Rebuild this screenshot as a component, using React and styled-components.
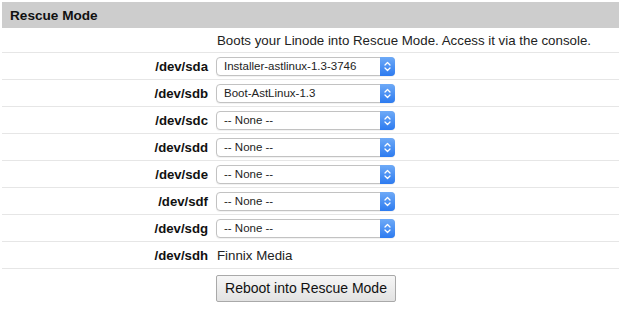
import React from "react";
import styled, { createGlobalStyle } from "styled-components";

const Global = createGlobalStyle`
  html, body { margin: 0; padding: 0; background: #fff; }
  body { font-family: "Liberation Sans", Arial, Helvetica, sans-serif; color: #111; }
`;

const Page = styled.div`
  padding: 2px 0 0 2px;
  width: 617px;
`;

const Header = styled.div`
  height: 26px;
  background: #cdcdcd;
  display: flex;
  align-items: center;
  padding-left: 8px;
  font-weight: bold;
  font-size: 13.6px;
  color: #111;
`;

const Row = styled.div`
  display: grid;
  grid-template-columns: 210px 1fr;
  align-items: center;
  height: ${(p) => p.$h || 27}px;
  border-bottom: ${(p) => (p.$last ? "none" : "1px solid #e6e6e6")};
  box-sizing: border-box;
`;

const Label = styled.div`
  text-align: right;
  padding-right: 4px;
  font-weight: bold;
  font-size: 13.2px;
  color: #111;
`;

const Value = styled.div`
  padding-left: 5px;
  font-size: 13.3px;
  color: #222;
  display: flex;
  align-items: center;
`;

const SelectBox = styled.div`
  position: relative;
  width: 179px;
  height: 19px;
  box-sizing: border-box;
  border: 1px solid #c2c2c2;
  border-radius: 4px;
  background: #fff;
  box-shadow: 0 1px 1px rgba(0,0,0,0.06);
  display: flex;
  align-items: center;
  margin-left: -1px;
`;

const SelectText = styled.span`
  font-family: "Liberation Sans", Arial, sans-serif;
  font-size: 11.5px;
  color: #222;
  padding-left: 7px;
  white-space: nowrap;
`;

const Cap = styled.div`
  position: absolute;
  top: -1px;
  right: -1px;
  bottom: -1px;
  width: 15px;
  border-radius: 0 4px 4px 0;
  background: linear-gradient(#6eaaf7, #2d7bf0);
  display: flex;
  align-items: center;
  justify-content: center;
`;

const Button = styled.button`
  margin-left: -1px;
  width: 180px;
  height: 27px;
  border: 1px solid #a9a9a9;
  border-radius: 2px;
  background: linear-gradient(#f6f6f6, #e2e2e2);
  font-family: "Liberation Sans", Arial, sans-serif;
  font-size: 14px;
  color: #111;
  padding: 0;
`;

function Chevrons() {
  return (
    <svg width="7" height="11" viewBox="0 0 7 11">
      <path d="M1 4 L3.5 1.5 L6 4 M1 7 L3.5 9.5 L6 7" fill="none" stroke="#fff" strokeWidth="1.3" strokeLinecap="round" strokeLinejoin="round" />
    </svg>
  );
}

function Select({ value }) {
  return (
    <SelectBox>
      <SelectText>{value}</SelectText>
      <Cap><Chevrons /></Cap>
    </SelectBox>
  );
}

const devices = [
  ["/dev/sda", "Installer-astlinux-1.3-3746"],
  ["/dev/sdb", "Boot-AstLinux-1.3"],
  ["/dev/sdc", "-- None --"],
  ["/dev/sdd", "-- None --"],
  ["/dev/sde", "-- None --"],
  ["/dev/sdf", "-- None --"],
  ["/dev/sdg", "-- None --"],
];

export default function App() {
  return (
    <>
      <Global />
      <Page>
        <Header>Rescue Mode</Header>
        <Row $h={25}>
          <Label />
          <Value>Boots your Linode into Rescue Mode. Access it via the console.</Value>
        </Row>
        {devices.map(([d, v]) => (
          <Row key={d}>
            <Label>{d}</Label>
            <Value><Select value={v} /></Value>
          </Row>
        ))}
        <Row>
          <Label>/dev/sdh</Label>
          <Value>Finnix Media</Value>
        </Row>
        <Row $h={38} $last>
          <Label />
          <Value><Button>Reboot into Rescue Mode</Button></Value>
        </Row>
      </Page>
    </>
  );
}
